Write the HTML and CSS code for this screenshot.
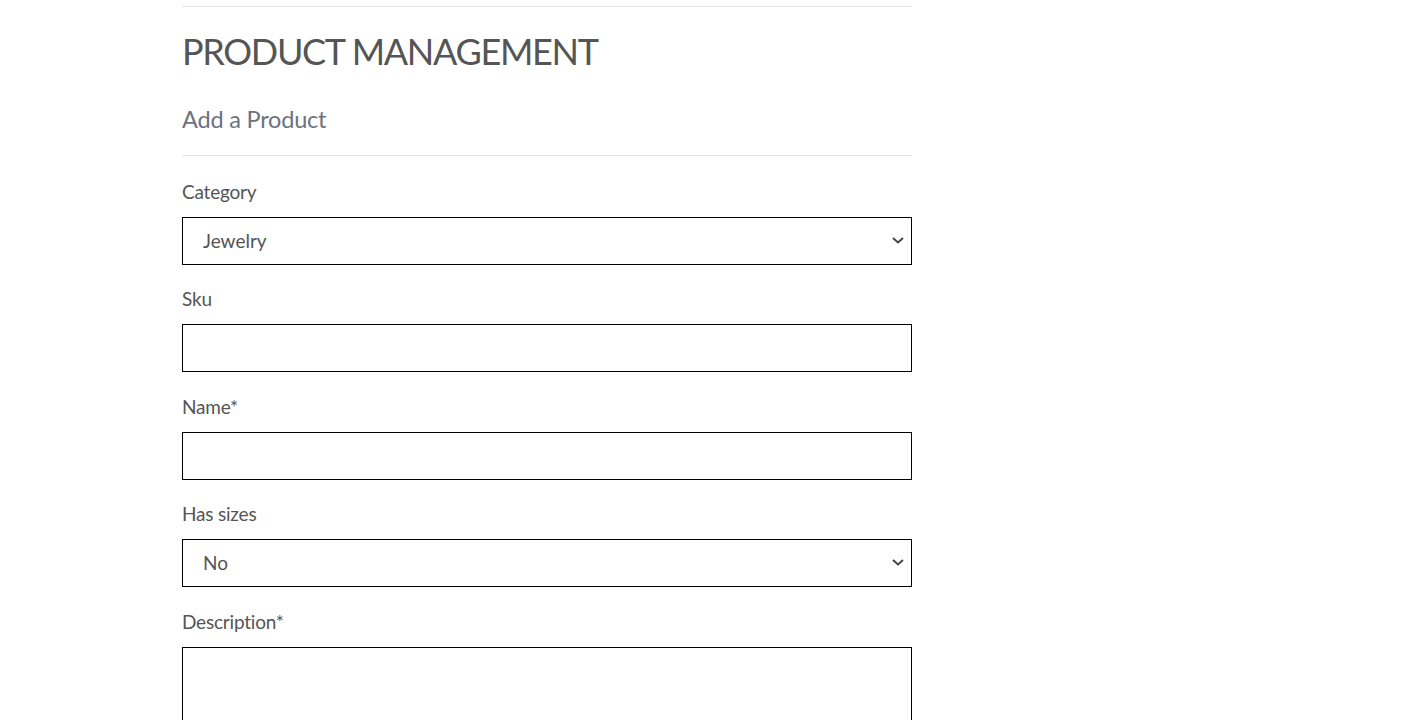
FILE: index.html
```html
<!DOCTYPE html>
<html>
<head>
<meta charset="utf-8">
<link rel="stylesheet" href="styles.css">
</head>
<body>
<main class="page">
  <hr class="rule rule-top">
  <h1 class="title">PRODUCT MANAGEMENT</h1>
  <h2 class="subtitle">Add a Product</h2>
  <hr class="rule rule-sub">
  <form class="form">
    <div class="field">
      <label class="label" for="category">Category</label>
      <select class="control select" id="category"><option>Jewelry</option></select>
    </div>
    <div class="field">
      <label class="label" for="sku">Sku</label>
      <input class="control" id="sku" type="text">
    </div>
    <div class="field">
      <label class="label" for="name">Name*</label>
      <input class="control" id="name" type="text">
    </div>
    <div class="field">
      <label class="label" for="sizes">Has sizes</label>
      <select class="control select" id="sizes"><option>No</option></select>
    </div>
    <div class="field">
      <label class="label" for="desc">Description*</label>
      <textarea class="control area" id="desc"></textarea>
    </div>
  </form>
</main>
</body>
</html>
```
FILE: styles.css
```css
html, body {
  margin: 0;
  padding: 0;
  background: #fff;
}
body {
  font-family: Lato, "Liberation Sans", sans-serif;
  color: #555;
}
.page {
  width: 730px;
  margin-left: 182px;
  padding-top: 6px;
}
.rule {
  border: 0;
  border-top: 1px solid #e6e6e6;
  margin: 0;
}
.title {
  margin: 0;
  font-weight: 400;
  font-size: 36px;
  letter-spacing: -1.3px;
  line-height: 48px;
  padding-top: 20px;
  color: #555;
}
.subtitle {
  margin: 0;
  font-weight: 400;
  font-size: 23.5px;
  letter-spacing: -0.2px;
  line-height: 30px;
  padding-top: 29px;
  color: #6b7280;
}
.rule-sub {
  margin-top: 21px;
}
.form {
  padding-top: 22px;
}
.field {
  margin-bottom: 20.5px;
}
.field:nth-child(4) {
  margin-bottom: 21.5px;
}
.label {
  display: block;
  font-size: 19px;
  letter-spacing: -0.2px;
  line-height: 28px;
  margin-bottom: 11px;
  color: #555;
}
.control {
  display: block;
  box-sizing: border-box;
  width: 730px;
  height: 48px;
  border: 1px solid #000;
  border-radius: 0;
  background: #fff;
  font-family: Lato, "Liberation Sans", sans-serif;
  font-size: 19px;
  color: #555;
  padding: 0 12px 0 20px;
  margin: 0;
}
.select {
  -webkit-appearance: none;
  appearance: none;
  height: 47.5px;
  background-image: url("data:image/svg+xml;utf8,<svg xmlns='http://www.w3.org/2000/svg' width='12' height='7' viewBox='0 0 12 7'><polyline points='1,1 6,5.5 11,1' fill='none' stroke='%23444' stroke-width='2'/></svg>");
  background-repeat: no-repeat;
  background-position: right 7px center;
  background-size: 12px 7px;
}
.area {
  height: 120px;
  resize: vertical;
}
```
